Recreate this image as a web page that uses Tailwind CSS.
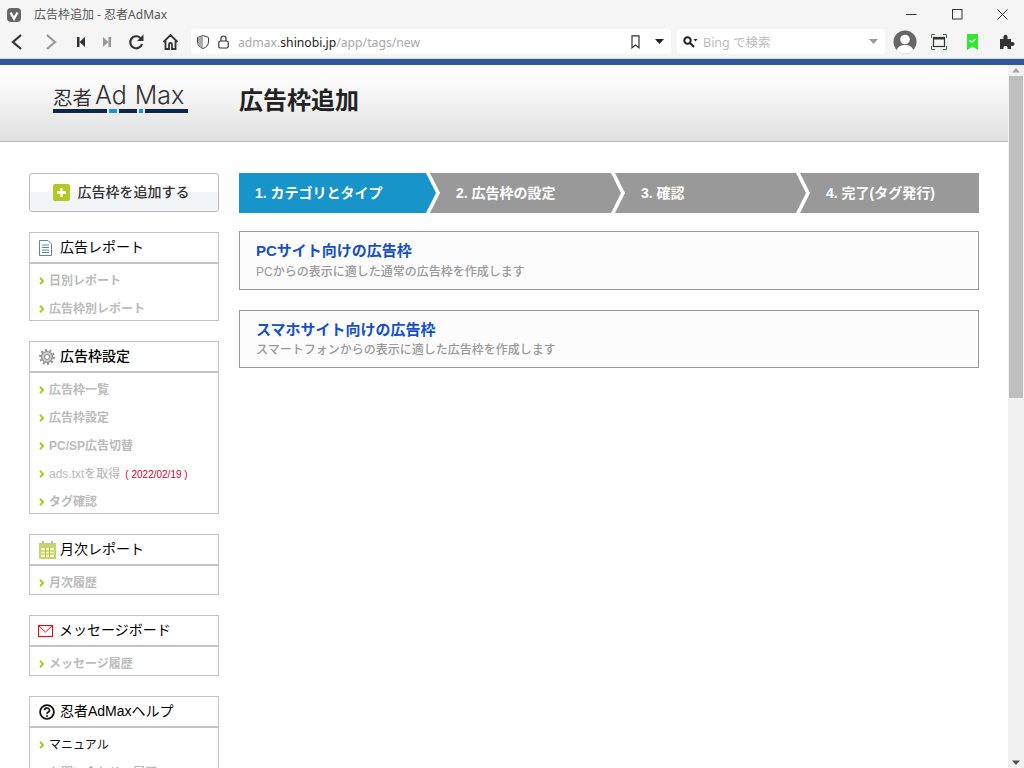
<!DOCTYPE html>
<html lang="ja"><head><meta charset="utf-8"><title>広告枠追加 - 忍者AdMax</title>
<script src="https://cdn.jsdelivr.net/npm/@tailwindcss/browser@4"></script></head>
<body class="h-screen overflow-hidden bg-white font-['Liberation_Sans','Noto_Sans_CJK_JP',sans-serif] text-[#111]">
<div class="flex h-[59px] flex-col border-b border-[#d8d8d8] bg-[#f5f5f5]">
  <div class="flex h-[29px] items-center">
    <svg class="ml-[7px] h-[14px] w-[14px]" viewBox="0 0 14 14"><rect width="14" height="14" rx="4" fill="#666"/><path d="M3.5 4.5 7 10.5l3.5-6" fill="none" stroke="#fff" stroke-width="2.4"/></svg>
    <span class="ml-[13px] font-['Noto_Sans','Noto_Sans_CJK_JP',sans-serif] text-[12px] text-[#555]">広告枠追加 - 忍者AdMax</span>
    <svg class="ml-auto mr-[35px] h-[11px] w-[11px]" viewBox="0 0 11 11"><path d="M0 5.5h10.5" stroke="#333"/></svg>
    <svg class="mr-[34px] h-[11px] w-[11px]" viewBox="0 0 11 11"><rect x=".5" y=".5" width="9.5" height="9.5" fill="none" stroke="#333"/></svg>
    <svg class="mr-[16px] h-[11px] w-[11px]" viewBox="0 0 11 11"><path d="M.5.500l10 10m0-10-10 10" stroke="#333"/></svg>
  </div>
  <div class="flex h-[29px] items-start">
    <svg class="ml-[10px] mt-[4px] h-[18px] w-[14px]" viewBox="0 0 14 18"><path d="M11 2 3 9l8 7" fill="none" stroke="#333" stroke-width="2.2"/></svg>
    <svg class="ml-[20px] mt-[4px] h-[18px] w-[14px]" viewBox="0 0 14 18"><path d="m3 2 8 7-8 7" fill="none" stroke="#999" stroke-width="2.2"/></svg>
    <svg class="ml-[18px] mt-[7px] h-[12px] w-[10px]" viewBox="0 0 10 12"><path d="M1 1h2.500v10H1zM9 1v10L3.500 6z" fill="#333"/></svg>
    <svg class="ml-[16px] mt-[7px] h-[12px] w-[10px]" viewBox="0 0 10 12"><path d="M1 1v10l5.500-5zM6.500 1H9v10H6.500z" fill="#999"/></svg>
    <svg class="ml-[16px] mt-[4px] h-[18px] w-[17px]" viewBox="0 0 17 18"><path d="M14 11a6 6 0 1 1-1.500-6" fill="none" stroke="#333" stroke-width="2.200"/><path d="M15.500 1.500V8H9z" fill="#333"/></svg>
    <svg class="ml-[17px] mt-[4px] h-[18px] w-[17px]" viewBox="0 0 17 18"><path d="M1.500 9 8.500 2l7 7M3.500 8v8h3.500v-4.500a1.500 1.500 0 0 1 3 0V16h3.500V8" fill="none" stroke="#333" stroke-width="1.800"/></svg>
    <div class="ml-[12px] flex h-[25px] w-[480px] items-center rounded-[4px] bg-white">
      <svg class="ml-[6px] h-[14px] w-[12px]" viewBox="0 0 12 14"><path d="M6 .5 11.500 2.500V7c0 3-2.500 5.500-5.500 6.500C3 12.500.5 10 .5 7V2.500z" fill="#fff" stroke="#444"/><path d="M6 1v12C3.500 12 1 10 1 7V3z" fill="#aaa"/></svg>
      <svg class="ml-[9px] h-[14px] w-[11px]" viewBox="0 0 11 14"><rect x=".8" y="6" width="9.400" height="7" rx="1.500" fill="none" stroke="#333" stroke-width="1.200"/><path d="M3 6V3.500a2.500 2.500 0 0 1 5 0V6" fill="none" stroke="#333" stroke-width="1.200"/></svg>
      <span class="ml-[9px] pt-[3px] font-['Noto_Sans',sans-serif] text-[12.200px] text-[#aaa]">admax.<span class="text-[#222]">shinobi.jp</span>/app/tags/new</span>
      <svg class="ml-auto h-[14px] w-[9px]" viewBox="0 0 9 14"><path d="M1 .8h7v12L4.500 10 1 12.800z" fill="none" stroke="#333" stroke-width="1.200"/></svg>
      <svg class="ml-[15px] mr-[7px] h-[5px] w-[9px]" viewBox="0 0 9 5"><path d="M0 0h9L4.500 5z" fill="#222"/></svg>
    </div>
    <div class="ml-[6px] flex h-[25px] w-[208px] items-center rounded-[4px] bg-white">
      <svg class="ml-[6px] h-[12px] w-[15px]" viewBox="0 0 15 12"><circle cx="4.500" cy="4.500" r="3.200" fill="none" stroke="#222" stroke-width="2"/><path d="m7 7 4 4" stroke="#222" stroke-width="2.200"/><path d="M10.500 3h4l-2 2.500z" fill="#222"/></svg>
      <span class="ml-[5px] pt-[4px] font-['Noto_Sans','Noto_Sans_CJK_JP',sans-serif] text-[12.500px] text-[#bbb]">Bing で検索</span>
      <svg class="ml-auto mr-[7px] h-[5px] w-[9px]" viewBox="0 0 9 5"><path d="M0 0h9L4.500 5z" fill="#999"/></svg>
    </div>
    <svg class="ml-[8px] mt-[1px] h-[24px] w-[24px]" viewBox="0 0 24 24"><circle cx="12" cy="12" r="11.500" fill="#666"/><circle cx="12" cy="9.500" r="4.800" fill="#fff"/><path d="M3.500 20c2-4 5-5 8.500-5s6.500 1 8.500 5a11.500 11.500 0 0 1-17 0z" fill="#fff"/></svg>
    <svg class="ml-[14px] mt-[5px] h-[16px] w-[16px]" viewBox="0 0 16 16"><path d="M.5 4V.5H4M12 .5h3.500V4M15.500 12v3.500H12M4 15.500H.5V12" fill="none" stroke="#2e7d32"/><rect x="2.500" y="3.500" width="11" height="9" fill="none" stroke="#333" stroke-width="1.200"/><path d="M2.500 4h11v1.500h-11z" fill="#333"/></svg>
    <svg class="ml-[20px] mt-[5px] h-[16px] w-[11px]" viewBox="0 0 11 16"><path d="M0 0h11v16l-5.500-3.500L0 16z" fill="#2ee82e"/><path d="m2.500 6.500 2 1.800 4-3" fill="none" stroke="#fff" stroke-width="1.200"/></svg>
    <svg class="ml-[21px] mt-[5px] h-[16px] w-[16px]" viewBox="0 0 16 16"><path d="M1 5h3.500C4 2.500 5 .8 6.500.8S9 2.500 8.500 5H12v3.300c2-.6 3.500.2 3.500 1.700s-1.500 2.300-3.500 1.700V15H8.500c.5-2-.5-3-2-3s-2.500 1-2 3H1z" fill="#333"/></svg>
  </div>
</div>
<div class="h-[6px] bg-[#2f5a9a]"></div>
<div class="flex">
  <div class="h-[703px] min-w-0 flex-1 overflow-hidden">
    <header class="flex h-[77px] items-start border-b border-[#bbb] bg-gradient-to-b from-white from-10% to-[#e0e0e0]">
      <div class="ml-[53px] mt-[20px] w-[135px]">
        <div class="flex h-[23px] items-end whitespace-nowrap leading-none text-[#333]"><span class="text-[19.500px] font-normal">忍者</span><span class="ml-[3px] font-['Inter',sans-serif] text-[25px] font-light">Ad</span><span class="ml-[8px] font-['Inter',sans-serif] text-[25px] font-light">Max</span></div>
        <div class="mt-[1px] flex h-[4px] gap-[2px]"><i class="w-[54px] bg-[#0e2748]"></i><i class="w-[8px] bg-[#1a94cb]"></i><i class="w-[18px] bg-[#0e2748]"></i><i class="w-[4px] bg-[#1a94cb]"></i><i class="flex-1 bg-[#0e2748]"></i></div>
      </div>
      <h1 class="ml-[51px] mt-[24px] text-[24px] font-bold leading-[24px] text-[#222]">広告枠追加</h1>
    </header>
    <div class="flex items-start gap-[20px] pl-[29px] pr-[29px] pt-[31px]">
      <aside class="flex w-[190px] shrink-0 flex-col gap-[20px]">
        <a class="flex h-[39px] items-center justify-center gap-[8px] rounded-[3px] border border-[#bbb] bg-[linear-gradient(#fff_0,#fff_48%,#f2f4f8_48%)] pr-[6px] text-[14px] font-medium text-[#333]">
          <svg class="h-[17px] w-[17px]" viewBox="0 0 17 17"><rect width="17" height="17" rx="2" fill="#b2c826"/><path d="M8.500 4v9M4 8.500h9" stroke="#fff" stroke-width="2.400"/></svg>広告枠を追加する
        </a>
        <section class="border border-[#c4c4c4]">
          <h2 class="flex h-[31px] items-center border-b-2 border-[#c4c4c4] pl-[9px] text-[14px] font-normal text-black"><svg class="mr-[8px] h-[16px] w-[13px]" viewBox="0 0 13 16"><path d="M.5.500h8.500l3.500 3.500v11.500H.5z" fill="#fff" stroke="#5f80b5"/><path d="M3 5h7M3 7.500h7M3 10h7M3 12.500h7" stroke="#5f80b5"/></svg>広告レポート</h2>
          <ul class="mb-[-3px] pt-[3px] text-[12px] font-semibold text-[#bbb]">
            <li class="flex h-[28px] items-center pl-[9px]"><svg class="mr-[5px] h-[8px] w-[5px]" viewBox="0 0 5 8"><path d="m1 .8 3 3.200-3 3.200" fill="none" stroke="#b2c826" stroke-width="2"/></svg>日別レポート</li>
            <li class="flex h-[28px] items-center pl-[9px]"><svg class="mr-[5px] h-[8px] w-[5px]" viewBox="0 0 5 8"><path d="m1 .8 3 3.200-3 3.200" fill="none" stroke="#b2c826" stroke-width="2"/></svg>広告枠別レポート</li>
          </ul>
        </section>
        <section class="border border-[#c4c4c4]">
          <h2 class="flex h-[31px] items-center border-b-2 border-[#c4c4c4] pl-[9px] text-[14px] font-medium text-black"><svg class="mr-[5px] h-[16px] w-[16px]" viewBox="0 0 16 16"><circle cx="8" cy="8" r="5.500" fill="#ccc" stroke="#888" stroke-width="1.200"/><circle cx="8" cy="8" r="2.500" fill="#fff" stroke="#888"/><circle cx="8" cy="8" r="7" fill="none" stroke="#888" stroke-width="1.800" stroke-dasharray="2 2.400"/></svg>広告枠設定</h2>
          <ul class="mb-[-3px] pt-[3px] text-[12px] font-semibold text-[#bbb]">
            <li class="flex h-[28px] items-center pl-[9px]"><svg class="mr-[5px] h-[8px] w-[5px]" viewBox="0 0 5 8"><path d="m1 .8 3 3.200-3 3.200" fill="none" stroke="#b2c826" stroke-width="2"/></svg>広告枠一覧</li>
            <li class="flex h-[28px] items-center pl-[9px]"><svg class="mr-[5px] h-[8px] w-[5px]" viewBox="0 0 5 8"><path d="m1 .8 3 3.200-3 3.200" fill="none" stroke="#b2c826" stroke-width="2"/></svg>広告枠設定</li>
            <li class="flex h-[28px] items-center pl-[9px]"><svg class="mr-[5px] h-[8px] w-[5px]" viewBox="0 0 5 8"><path d="m1 .8 3 3.200-3 3.200" fill="none" stroke="#b2c826" stroke-width="2"/></svg>PC/SP広告切替</li>
            <li class="flex h-[28px] items-center pl-[9px]"><svg class="mr-[5px] h-[8px] w-[5px]" viewBox="0 0 5 8"><path d="m1 .8 3 3.200-3 3.200" fill="none" stroke="#b2c826" stroke-width="2"/></svg><span class="font-medium">ads.txtを取得</span><span class="ml-[5px] text-[10px] font-normal text-[#d6002a]">( 2022/02/19 )</span></li>
            <li class="flex h-[28px] items-center pl-[9px]"><svg class="mr-[5px] h-[8px] w-[5px]" viewBox="0 0 5 8"><path d="m1 .8 3 3.200-3 3.200" fill="none" stroke="#b2c826" stroke-width="2"/></svg>タグ確認</li>
          </ul>
        </section>
        <section class="border border-[#c4c4c4]">
          <h2 class="flex h-[31px] items-center border-b-2 border-[#c4c4c4] pl-[9px] text-[14px] font-normal text-black"><svg class="mr-[4px] h-[18px] w-[17px]" viewBox="0 0 17 18"><rect y="2" width="17" height="16" fill="#c6d56a"/><rect x="2" y="7" width="13" height="9" fill="#f4f6dc"/><path d="M2 10h13M2 13h13M6.500 7v9M10.500 7v9" stroke="#b2c826"/><path d="M4 0v3M13 0v3" stroke="#bbb" stroke-width="2"/></svg>月次レポート</h2>
          <ul class="mb-[-3px] pt-[3px] text-[12px] font-semibold text-[#bbb]">
            <li class="flex h-[28px] items-center pl-[9px]"><svg class="mr-[5px] h-[8px] w-[5px]" viewBox="0 0 5 8"><path d="m1 .8 3 3.200-3 3.200" fill="none" stroke="#b2c826" stroke-width="2"/></svg>月次履歴</li>
          </ul>
        </section>
        <section class="border border-[#c4c4c4]">
          <h2 class="flex h-[31px] items-center border-b-2 border-[#c4c4c4] pl-[8px] text-[14px] font-normal text-black"><svg class="mr-[6px] h-[12px] w-[15px]" viewBox="0 0 15 12"><rect x=".5" y=".5" width="14" height="11" fill="#fff" stroke="#f00"/><path d="m1 1 6.500 6L14 1" fill="none" stroke="#f00"/></svg>メッセージボード</h2>
          <ul class="mb-[-3px] pt-[3px] text-[12px] font-semibold text-[#bbb]">
            <li class="flex h-[28px] items-center pl-[9px]"><svg class="mr-[5px] h-[8px] w-[5px]" viewBox="0 0 5 8"><path d="m1 .8 3 3.200-3 3.200" fill="none" stroke="#b2c826" stroke-width="2"/></svg>メッセージ履歴</li>
          </ul>
        </section>
        <section class="border border-[#c4c4c4]">
          <h2 class="flex h-[31px] items-center border-b-2 border-[#c4c4c4] pl-[9px] text-[14px] font-normal text-black"><svg class="mr-[5px] h-[16px] w-[16px]" viewBox="0 0 16 16"><circle cx="8" cy="8" r="6.900" fill="none" stroke="#111" stroke-width="1.800"/><path d="M5.500 6.300a2.500 2.200 0 1 1 3.500 2c-.8.400-1 .8-1 1.700" fill="none" stroke="#111" stroke-width="1.600"/><circle cx="8" cy="12" r="1" fill="#111"/></svg>忍者AdMaxヘルプ</h2>
          <ul class="pt-[3px] text-[12px]">
            <li class="flex h-[28px] items-center pl-[9px]"><svg class="mr-[5px] h-[8px] w-[5px]" viewBox="0 0 5 8"><path d="m1 .8 3 3.200-3 3.200" fill="none" stroke="#b2c826" stroke-width="2"/></svg>マニュアル</li>
            <li class="flex h-[28px] items-center pl-[9px] font-semibold text-[#bbb]"><svg class="mr-[5px] h-[8px] w-[5px]" viewBox="0 0 5 8"><path d="m1 .8 3 3.200-3 3.200" fill="none" stroke="#b2c826" stroke-width="2"/></svg>お問い合わせ・履歴</li>
          </ul>
        </section>
      </aside>
      <main class="min-w-0 flex-1">
        <ol class="flex h-[40px] text-[14px] font-bold text-white">
          <li class="flex w-[197px] items-center bg-[#1794ca] pl-[16px] [clip-path:polygon(0_0,187px_0,197px_50%,187px_100%,0_100%)]">1. カテゴリとタイプ</li>
          <li class="ml-[-6px] flex w-[191px] items-center bg-[#999] pl-[26px] [clip-path:polygon(0_0,181px_0,191px_50%,181px_100%,0_100%,10px_50%)]">2. 広告枠の設定</li>
          <li class="ml-[-6px] flex w-[191px] items-center bg-[#999] pl-[26px] [clip-path:polygon(0_0,181px_0,191px_50%,181px_100%,0_100%,10px_50%)]">3. 確認</li>
          <li class="ml-[-6px] flex flex-1 items-center bg-[#999] pl-[26px] [clip-path:polygon(0_0,100%_0,100%_100%,0_100%,10px_50%)]">4. 完了(タグ発行)</li>
        </ol>
        <a class="mt-[18px] flex h-[59px] flex-col justify-center border border-[#999] bg-[#fcfcfc] pb-[2px] pl-[16px]">
          <span class="text-[15px] font-bold leading-[24px] text-[#1550c8]">PCサイト向けの広告枠</span>
          <span class="text-[12px] font-medium leading-[18px] text-[#999]">PCからの表示に適した通常の広告枠を作成します</span>
        </a>
        <a class="mt-[20px] flex h-[58px] flex-col justify-center border border-[#999] bg-[#fcfcfc] pb-[1px] pl-[16px]">
          <span class="text-[15px] font-bold leading-[22px] text-[#1550c8]">スマホサイト向けの広告枠</span>
          <span class="text-[12px] font-medium leading-[18px] text-[#999]">スマートフォンからの表示に適した広告枠を作成します</span>
        </a>
      </main>
    </div>
  </div>
  <div class="flex h-[703px] w-[16px] shrink-0 flex-col items-center bg-[#f1f1f1]">
    <svg class="mt-[1px] h-[9px] w-[8px]" viewBox="0 0 8 9"><path d="M0 6.500h8L4 2z" fill="#a8a8a8"/></svg>
    <div class="mt-[1px] h-[322px] w-[14px] bg-[#bfbfbf]"></div>
    <svg class="mt-auto mb-[1px] h-[9px] w-[8px]" viewBox="0 0 8 9"><path d="M0 2.500h8L4 7z" fill="#505050"/></svg>
  </div>
</div>
</body></html>
